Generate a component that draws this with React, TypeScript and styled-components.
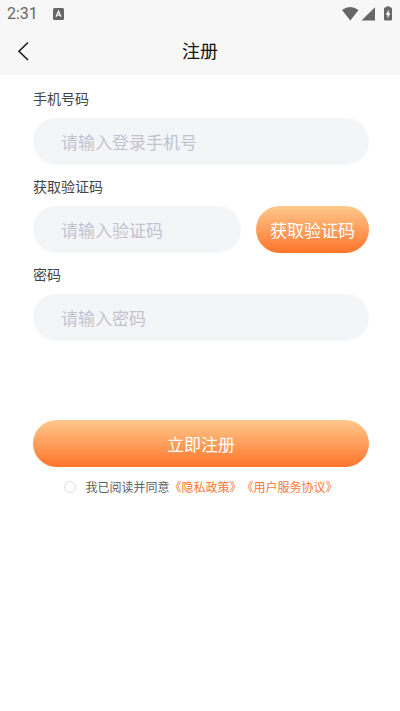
import React, { useState } from "react";
import styled, { createGlobalStyle } from "styled-components";

const GlobalStyle = createGlobalStyle`
  *, *::before, *::after { box-sizing: border-box; }
  body {
    margin: 0;
    background: #ffffff;
    font-family: "Noto Sans CJK SC", "Noto Sans", sans-serif;
  }
  button, input { font-family: inherit; }
`;

const Page = styled.div`
  min-height: 100vh;
  background: #ffffff;
`;

const Header = styled.header`
  background: #f7f7f7;
`;

const StatusBar = styled.div`
  display: flex;
  align-items: center;
  height: 26px;
  padding: 2px 7px 0;
  color: #666666;
  svg { display: block; }
`;

const Clock = styled.time`
  font: 400 16px/20px Roboto, sans-serif;
  margin-right: 15px;
`;

const StatusIcons = styled.div`
  display: flex;
  align-items: center;
  margin-left: auto;
`;

const NavBar = styled.nav`
  display: grid;
  grid-template-columns: 48px 1fr 48px;
  align-items: center;
  height: 49px;
`;

const BackButton = styled.button`
  display: flex;
  align-items: center;
  height: 48px;
  padding: 0 0 0 17px;
  border: 0;
  background: none;
  color: #1a1a1a;
  cursor: pointer;
`;

const Title = styled.h1`
  margin: 0;
  padding-bottom: 2px;
  font-size: 18px;
  font-weight: 400;
  line-height: 26px;
  text-align: center;
  color: #111111;
`;

const Form = styled.form`
  padding: 13px 31px 0 33px;
`;

const Field = styled.div`
  display: flex;
  flex-direction: column;
  gap: 10px;
  margin-bottom: 11px;
`;

const Label = styled.label`
  font-size: 14px;
  line-height: 20px;
  color: #444444;
`;

const FieldRow = styled.div`
  display: flex;
  gap: 15px;
`;

const TextInput = styled.input`
  min-width: 0;
  width: 100%;
  height: 47px;
  padding: 0 28px;
  border: 0;
  border-radius: 24px;
  outline-color: #ff7a30;
  background: #f4f5f7;
  font-size: 17px;
  color: #333333;
  &::placeholder { color: #c2c3cf; opacity: 1; }
`;

const PillButton = styled.button<{ $wide?: boolean }>`
  flex: none;
  width: ${({ $wide }) => ($wide ? "100%" : "113px")};
  height: 47px;
  padding: 0;
  border: 0;
  border-radius: 24px;
  background: linear-gradient(180deg, #ffc88c 0%, #ff742c 100%);
  font-size: 17px;
  color: #ffffff;
  white-space: nowrap;
  cursor: pointer;
`;

const Actions = styled.div`
  margin-top: 79px;
`;

const Agreement = styled.div`
  display: flex;
  align-items: center;
  justify-content: center;
  margin-top: 10px;
  font-size: 12px;
  line-height: 20px;
  color: #606060;
`;

const Check = styled.input`
  appearance: none;
  flex: none;
  width: 12px;
  height: 12px;
  margin: 0 9px 0 0;
  border: 1px solid #dddddd;
  border-radius: 50%;
  background: #ffffff;
  &:checked { border-color: #ff742c; background: #ff742c; }
`;

const PolicyLink = styled.a`
  color: #ff7634;
  text-decoration: none;
`;

const KeyboardIcon = () => (
  <svg width="11" height="12" viewBox="0 0 11 12" aria-hidden="true">
    <rect width="11" height="12" rx="1.5" fill="currentColor" />
    <path d="M3 8.8 5.5 3.2 8 8.8M4 7.2H7" fill="none" stroke="#f7f7f7" strokeWidth="1.3" />
  </svg>
);

const SignalIcons = () => (
  <svg width="51" height="16" viewBox="0 0 51 16" fill="currentColor" aria-hidden="true">
    <path d="M0 4Q8.3-2 16.5 4L8.3 14.5Z" />
    <path d="M33 1.2V14.5H19.500Z" />
    <path d="M44 1.5V.5H48V1.5H49Q50 1.5 50 2.5V13.5Q50 14.5 49 14.5H43Q42 14.5 42 13.5V2.5Q42 1.5 43 1.5Z" />
    <path d="M46.8 3.5 43.7 8.8H45.5V12.5L48.5 7.2H46.8Z" fill="#f7f7f7" />
  </svg>
);

const BackIcon = () => (
  <svg width="13" height="20" viewBox="0 0 13 20" aria-hidden="true">
    <path d="M11 1.5 2 10.3 11 19" fill="none" stroke="currentColor" strokeWidth="1.6" />
  </svg>
);

export default function App() {
  const [agreed, setAgreed] = useState(false);

  return (
    <Page>
      <GlobalStyle />
      <Header>
        <StatusBar>
          <Clock>2:31</Clock>
          <KeyboardIcon />
          <StatusIcons>
            <SignalIcons />
          </StatusIcons>
        </StatusBar>
        <NavBar>
          <BackButton type="button" aria-label="返回">
            <BackIcon />
          </BackButton>
          <Title>注册</Title>
        </NavBar>
      </Header>
      <Form onSubmit={(event) => event.preventDefault()}>
        <Field>
          <Label htmlFor="phone">手机号码</Label>
          <TextInput id="phone" type="tel" placeholder="请输入登录手机号" />
        </Field>
        <Field>
          <Label htmlFor="code">获取验证码</Label>
          <FieldRow>
            <TextInput id="code" inputMode="numeric" placeholder="请输入验证码" />
            <PillButton type="button">获取验证码</PillButton>
          </FieldRow>
        </Field>
        <Field>
          <Label htmlFor="password">密码</Label>
          <TextInput id="password" type="password" placeholder="请输入密码" />
        </Field>
        <Actions>
          <PillButton type="submit" $wide>立即注册</PillButton>
          <Agreement>
            <Check
              id="agree"
              type="checkbox"
              checked={agreed}
              onChange={(event) => setAgreed(event.target.checked)}
            />
            <label htmlFor="agree">我已阅读并同意</label>
            <PolicyLink href="#privacy">《隐私政策》</PolicyLink>
            <PolicyLink href="#terms">《用户服务协议》</PolicyLink>
          </Agreement>
        </Actions>
      </Form>
    </Page>
  );
}
